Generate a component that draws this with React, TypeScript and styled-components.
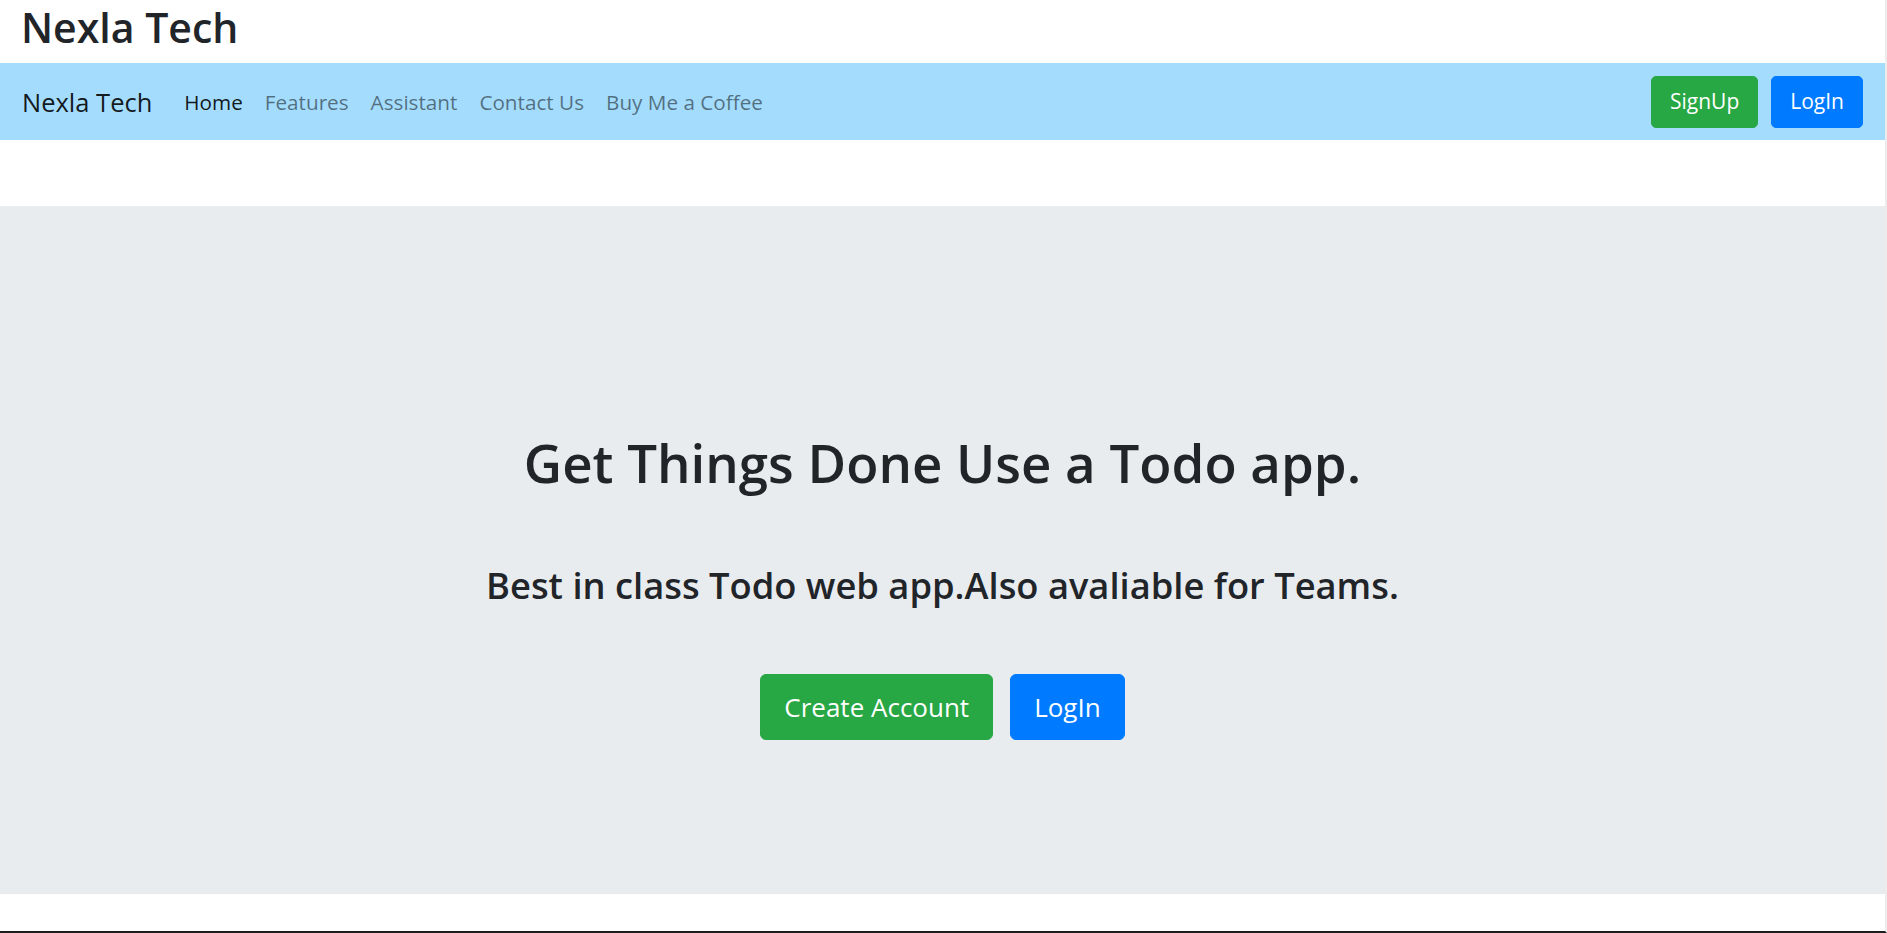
import React from "react";
import styled, { createGlobalStyle } from "styled-components";

const GlobalStyle = createGlobalStyle`
  html, body {
    margin: 0;
    padding: 0;
    background: #ffffff;
  }
  body {
    font-family: "Open Sans", "Noto Sans", sans-serif;
    color: #212529;
  }
  * { box-sizing: border-box; }
`;

const Page = styled.div`
  min-height: 100vh;
  border-right: 2px solid #ececec;
  border-bottom: 2px solid #1c1c1c;
  display: flex;
  flex-direction: column;
`;

const SiteTitle = styled.h2`
  margin: 0 0 8px 0;
  padding: 0 21px;
  font-size: 41px;
  font-weight: 600;
  line-height: 55px;
  color: #212529;
`;

const NavBar = styled.nav`
  height: 77px;
  background: #a4dcfd;
  display: flex;
  align-items: center;
  padding: 0 22px;
`;

const Brand = styled.a`
  font-size: 25.5px;
  color: rgba(0, 0, 0, 0.9);
  margin-right: 21px;
  text-decoration: none;
  white-space: nowrap;
`;

const NavList = styled.ul`
  display: flex;
  list-style: none;
  margin: 0;
  padding: 0;
  flex: 1;
`;

const NavLink = styled.a<{ $active?: boolean }>`
  display: block;
  padding: 0 11px;
  font-size: 20.7px;
  color: ${(p) => (p.$active ? "rgba(0,0,0,0.9)" : "rgba(0,0,0,0.5)")};
  text-decoration: none;
  white-space: nowrap;
`;

const NavActions = styled.div`
  display: flex;
  gap: 13px;
`;

const Button = styled.button<{ $variant: "success" | "primary"; $large?: boolean }>`
  font-family: inherit;
  border: 1px solid ${(p) => (p.$variant === "success" ? "#28a745" : "#007bff")};
  background: ${(p) => (p.$variant === "success" ? "#28a745" : "#007bff")};
  color: #ffffff;
  border-radius: ${(p) => (p.$large ? "6px" : "5px")};
  font-size: ${(p) => (p.$large ? "26px" : "21px")};
  height: ${(p) => (p.$large ? "66px" : "52px")};
  padding: ${(p) => (p.$large ? "0 23px" : "0 18px")};
  line-height: 1;
  cursor: pointer;
`;

const Jumbotron = styled.section`
  margin-top: 66px;
  height: 688px;
  background: #e9ecef;
  display: flex;
  flex-direction: column;
  align-items: center;
  padding-top: 225px;
`;

const Headline = styled.h1`
  margin: 0;
  font-size: 52.8px;
  font-weight: 600;
  line-height: 1.2;
  text-align: center;
`;

const Subline = styled.h3`
  margin: 70px 0 0 0;
  font-size: 36.3px;
  font-weight: 600;
  line-height: 1.2;
  text-align: center;
`;

const HeroActions = styled.div`
  margin-top: 66px;
  display: flex;
  gap: 17px;
`;

export default function App() {
  return (
    <>
      <GlobalStyle />
      <Page>
        <SiteTitle>Nexla Tech</SiteTitle>
        <NavBar>
          <Brand href="#">Nexla Tech</Brand>
          <NavList>
            <li><NavLink href="#" $active>Home</NavLink></li>
            <li><NavLink href="#">Features</NavLink></li>
            <li><NavLink href="#">Assistant</NavLink></li>
            <li><NavLink href="#">Contact Us</NavLink></li>
            <li><NavLink href="#">Buy Me a Coffee</NavLink></li>
          </NavList>
          <NavActions>
            <Button $variant="success">SignUp</Button>
            <Button $variant="primary">LogIn</Button>
          </NavActions>
        </NavBar>
        <Jumbotron>
          <Headline>Get Things Done Use a Todo app.</Headline>
          <Subline>Best in class Todo web app.Also avaliable for Teams.</Subline>
          <HeroActions>
            <Button $variant="success" $large>Create Account</Button>
            <Button $variant="primary" $large>LogIn</Button>
          </HeroActions>
        </Jumbotron>
      </Page>
    </>
  );
}
